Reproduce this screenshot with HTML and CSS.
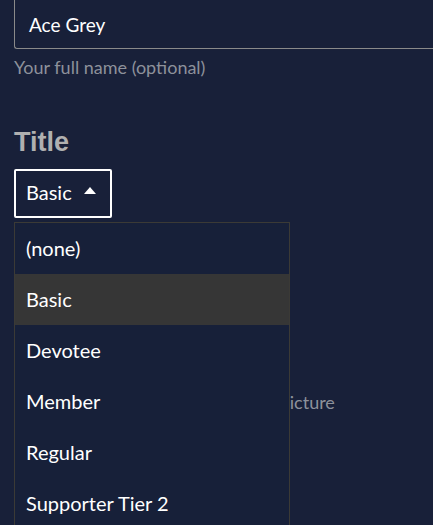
FILE: index.html
```html
<!DOCTYPE html>
<html>
<head>
<meta charset="utf-8">
<link rel="stylesheet" href="styles.css">
</head>
<body>
<div class="page">
  <div class="field">
    <div class="input">Ace Grey</div>
    <div class="help">Your full name (optional)</div>
  </div>
  <h2 class="label">Title</h2>
  <div class="select-wrap">
    <button class="select">Basic <span class="caret"></span></button>
    <ul class="menu">
      <li>(none)</li>
      <li class="active">Basic</li>
      <li>Devotee</li>
      <li>Member</li>
      <li>Regular</li>
      <li>Supporter Tier 2</li>
    </ul>
  </div>
  <div class="behind">
    <div class="help wide">Upload your profile picture</div>
  </div>
</div>
</body>
</html>
```
FILE: styles.css
```css
html, body {
  margin: 0;
  padding: 0;
  background: #182039;
  overflow: hidden;
}
.page {
  padding-left: 14px;
  font-family: Lato, "Open Sans", sans-serif;
  color: #fff;
  height: 525px;
}
.field {
  display: flex;
  flex-direction: column;
}
.input {
  box-sizing: border-box;
  height: 49px;
  border: 1px solid #8a8a8a;
  border-top: none;
  border-right: none;
  border-radius: 0 0 0 3px;
  padding: 13px 0 0 14px;
  font-size: 19px;
  color: #fff;
}
.help {
  font-size: 18px;
  color: #8d919b;
  margin-top: 7px;
}
.label {
  margin: 49px 0 0 0;
  font-family: "Liberation Sans", Arial, sans-serif;
  font-weight: bold;
  font-size: 27px;
  color: #b0b0b0;
  line-height: 31px;
}
.select-wrap {
  position: relative;
  margin-top: 11px;
}
.select {
  box-sizing: border-box;
  height: 49px;
  width: 98px;
  background: transparent;
  border: 2px solid #fff;
  border-radius: 2px;
  color: #fff;
  font-family: Lato, "Open Sans", sans-serif;
  font-size: 20px;
  padding: 0 0 3px 10px;
  display: flex;
  align-items: center;
  gap: 12px;
}
.caret {
  width: 0;
  height: 0;
  border-left: 6px solid transparent;
  border-right: 6px solid transparent;
  border-bottom: 7px solid #fff;
  margin-bottom: 4px;
}
.menu {
  position: absolute;
  left: 0;
  top: 53px;
  width: 276px;
  box-sizing: border-box;
  margin: 0;
  padding: 0;
  list-style: none;
  border: 1px solid #3b3a36;
  background: #172039;
  z-index: 2;
}
.menu li {
  height: 51px;
  display: flex;
  align-items: center;
  padding: 0 0 2px 11px;
  box-sizing: border-box;
  font-size: 20px;
  color: #fff;
}
.menu li.active {
  background: #363636;
}
.behind {
  padding-top: 166px;
}
.wide {
  white-space: nowrap;
  padding-left: 110px;
}
```
